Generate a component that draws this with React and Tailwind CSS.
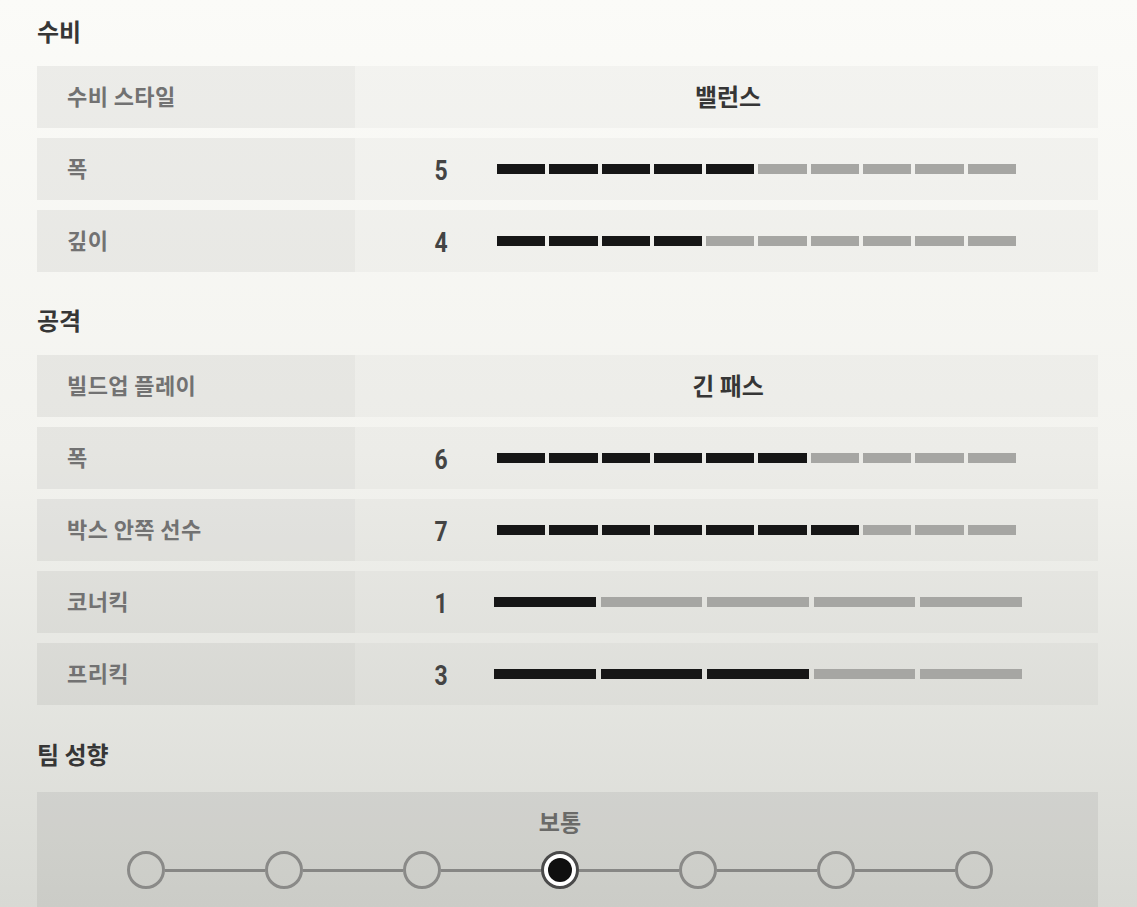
import React from "react";

const defense = [
    { label: "수비 스타일", value: "밸런스" },
    { label: "폭", level: 5, segments: 10 },
    { label: "깊이", level: 4, segments: 10 },
];

const attack = [
    { label: "빌드업 플레이", value: "긴 패스" },
    { label: "폭", level: 6, segments: 10 },
    { label: "박스 안쪽 선수", level: 7, segments: 10 },
    { label: "코너킥", level: 1, segments: 5 },
    { label: "프리킥", level: 3, segments: 5 },
];

function Bar({ level, segments }) {
    const wide = segments === 5;
    return (
        <div className={wide ? "ml-[38px] flex w-[528px] gap-[5px]" : "ml-[41px] flex w-[519px] gap-[4px]"}>
            {Array.from({ length: segments }).map((_, i) => (
                <div
                    key={i}
                    className={`h-[10px] flex-1 ${i < level ? "bg-[#161616]" : "bg-[#a6a6a3]"}`}
                />
            ))}
        </div>
    );
}

function Row({ item }) {
    return (
        <div className="flex h-[62px] w-[1061px]">
            {/* Label */}
            <div className="flex w-[318px] items-center bg-black/[0.055] pb-[4px] pl-[30px] text-[22px] font-bold tracking-[0.4px] text-[#727272]">
                {item.label}
            </div>

            {/* Value or level bar */}
            {item.value ? (
                <div className="flex flex-1 items-center justify-center bg-black/[0.028] pb-[3px] pl-[3px] text-[24px] font-bold text-[#363636]">
                    {item.value}
                </div>
            ) : (
                <div className="flex flex-1 items-center bg-black/[0.028] pl-[71px]">
                    <span className="w-[30px] pt-[4px] text-center font-['Roboto'] text-[27px] font-bold text-[#444] scale-x-[0.85]">
                        {item.level}
                    </span>
                    <Bar level={item.level} segments={item.segments} />
                </div>
            )}
        </div>
    );
}

function Section({ title, items, className }) {
    return (
        <div className={className}>
            <h2 className="mb-[19px] h-[30px] text-[24px] font-bold leading-[28px] text-[#363636]">{title}</h2>
            <div className="flex flex-col gap-[10px]">
                {items.map((item, i) => (
                    <Row key={i} item={item} />
                ))}
            </div>
        </div>
    );
}

export default function App() {
    const steps = [0, 1, 2, 3, 4, 5, 6];
    const selected = 3;

    return (
        <div className="h-[907px] overflow-hidden bg-gradient-to-b from-[#fbfbf8] via-[#f3f3ef] to-[#d8d9d4] pl-[37px] font-['Noto_Sans_CJK_KR',sans-serif]">
            <Section title="수비" items={defense} className="pt-[17px]" />
            <Section title="공격" items={attack} className="pt-[34px]" />

            {/* Team tendency */}
            <div className="pt-[35px]">
                <h2 className="mb-[22px] h-[30px] text-[24px] font-bold leading-[28px] text-[#363636]">팀 성향</h2>
                <div className="h-[140px] w-[1061px] bg-black/[0.06] pl-[90px] pt-[15px]">
                    <div className="w-[866px] text-center text-[23px] font-bold leading-[28px] text-[#6a6a68]">보통</div>
                    <div className="mt-[16px] flex w-[866px] items-center">
                        {steps.map((s) => (
                            <React.Fragment key={s}>
                                {s > 0 && <div className="h-[3px] flex-1 bg-[#878785]" />}
                                {s === selected ? (
                                    <div className="flex h-[38px] w-[38px] items-center justify-center rounded-full border-[3px] border-[#4a4a4a] bg-white">
                                        <div className="h-[24px] w-[24px] rounded-full bg-[#0f0f0f]" />
                                    </div>
                                ) : (
                                    <div className="h-[38px] w-[38px] rounded-full border-[3px] border-[#8a8a88]" />
                                )}
                            </React.Fragment>
                        ))}
                    </div>
                </div>
            </div>
        </div>
    );
}
